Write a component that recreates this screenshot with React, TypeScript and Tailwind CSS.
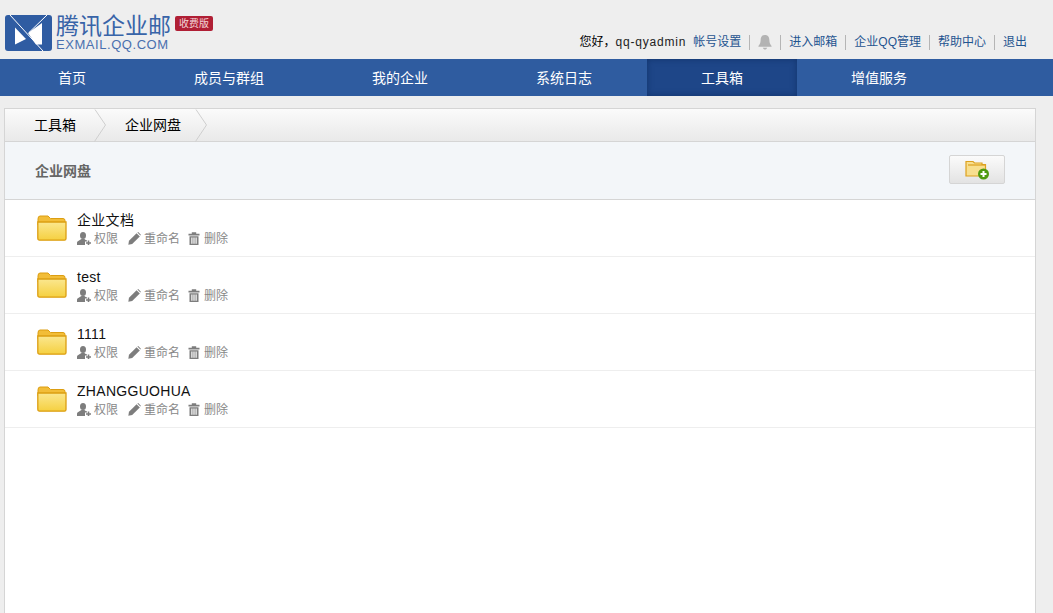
const font = { fontFamily: '"Liberation Sans", "Noto Sans CJK SC", sans-serif' }

const navItems = ['首页', '成员与群组', '我的企业', '系统日志', '工具箱', '增值服务']
const folders = ['企业文档', 'test', '1111', 'ZHANGGUOHUA']

function Logo() {
    return (
        <svg width="47" height="36" viewBox="0 0 47 36" className="mt-[1px] shrink-0">
            <rect x="0" y="0" width="47" height="36" rx="3" fill="#2f5ca2" />
            <path d="M10 12.5 L21 24 L10 29.5 Z" fill="#fff" />
            <path d="M37 8 L37 29.5 L31 29.5 L23 18 Z" fill="#fff" />
            <path d="M5 0 L38 36" stroke="#fff" strokeWidth="1" fill="none" />
            <path d="M42 0 L24 17.5" stroke="#fff" strokeWidth="1" fill="none" />
        </svg>
    )
}

function Bell() {
    return (
        <svg width="14" height="18" viewBox="0 0 16 18">
            <path d="M8 1 C11.5 1 13 3.5 13 7 C13 10 14 12 15.5 13.5 L15.5 14.5 L0.5 14.5 L0.5 13.5 C2 12 3 10 3 7 C3 3.5 4.5 1 8 1 Z" fill="#b3b3b3" />
            <path d="M5.5 15.5 L10.5 15.5 C10 17 9 17.5 8 17.5 C7 17.5 6 17 5.5 15.5 Z" fill="#b3b3b3" />
        </svg>
    )
}

function Folder() {
    return (
        <svg width="30" height="26" viewBox="0 0 30 26" className="shrink-0">
            <defs>
                <linearGradient id="folderFront" x1="0" y1="0" x2="0" y2="1">
                    <stop offset="0" stopColor="#fbe78f" />
                    <stop offset="1" stopColor="#f5d040" />
                </linearGradient>
            </defs>
            <path d="M1 4 Q1 1 3 1 L11 1 L13.5 3.5 L26 3.5 Q28 3.5 28 5.5 L28 10 L1 10 Z" fill="#f2bd38" stroke="#dc9e12" strokeWidth="1" />
            <path d="M0.8 7 L29 7 L29 23.5 Q29 25.2 27.5 25.2 L2.5 25.2 Q0.8 25.2 0.8 23 Z" fill="url(#folderFront)" stroke="#dc9e12" strokeWidth="1.3" />
        </svg>
    )
}

function AddFolder() {
    return (
        <svg width="25" height="20" viewBox="0 0 25 20">
            <path d="M1 1.5 L8 1.5 L9.5 3 L17 3 L17 4.5 L20.5 4.5 L20.5 16 L1 16 Z" fill="#f8df8f" stroke="#dda11f" strokeWidth="1.2" />
            <path d="M3 5 L20 5" stroke="#dda11f" strokeWidth="1.2" />
            <circle cx="18.5" cy="14" r="5.5" fill="#4f9a10" />
            <path d="M15.5 14 H21.5 M18.5 11 V17" stroke="#fff" strokeWidth="2" />
        </svg>
    )
}

function UserPlus() {
    return (
        <svg width="14" height="13" viewBox="0 0 14 13">
            <ellipse cx="6" cy="3.5" rx="3" ry="3.5" fill="#7d7d7d" />
            <path d="M0 13 L0 10.5 C0 9 3 8.2 4.5 7 L7.5 7 C8.5 8 9.5 8.3 10 8.6 L10 9.5 L8 9.5 L8 13 Z" fill="#7d7d7d" />
            <path d="M9 11 H14 M11.5 8.5 V13" stroke="#7d7d7d" strokeWidth="1.6" />
        </svg>
    )
}

function Pencil() {
    return (
        <svg width="13" height="13" viewBox="0 0 13 13">
            <path d="M0.3 12.7 L1 8.8 L8.6 1.2 L11.8 4.4 L4.2 12 Z" fill="#7d7d7d" />
            <path d="M9.4 0.6 L10.2 0.1 L12.9 2.8 L12.4 3.6 Z" fill="#7d7d7d" />
        </svg>
    )
}

function Trash() {
    return (
        <svg width="12" height="13" viewBox="0 0 12 13">
            <path d="M0.5 1.8 H3.8 V0.3 H8.2 V1.8 H11.5 V3.4 H0.5 Z" fill="#7d7d7d" />
            <path d="M1.5 4.3 H10.5 V13 H1.5 Z M3.3 5.6 V11.7 H4.5 V5.6 Z M5.4 5.6 V11.7 H6.6 V5.6 Z M7.5 5.6 V11.7 H8.7 V5.6 Z" fill="#7d7d7d" fillRule="evenodd" />
        </svg>
    )
}

function CrumbArrow() {
    return (
        <svg width="13" height="33" viewBox="0 0 13 33" className="shrink-0">
            <path d="M1 0.5 L11.5 16 L0.5 32.5" fill="none" stroke="#cfcfcf" strokeWidth="1" />
        </svg>
    )
}

function Divider() {
    return <span className="mx-2 h-[15px] w-px bg-[#b5b5b5]" />
}

export default function App() {
    return (
        <div className="h-[613px] w-[1053px] overflow-hidden bg-[#eeeeee] text-[12px]" style={font}>
            {/* Header */}
            <header className="flex h-[59px] items-start justify-between">
                <div className="flex pl-[5px] pt-[14px]">
                    <Logo />
                    <div className="ml-[4px] flex flex-col">
                        <span className="-mt-[1px] h-[26px] text-[23px] leading-[26px] text-[#3864a8]">腾讯企业邮</span>
                        <span className="text-[13px] leading-[11px] tracking-[0.55px] text-[#4a70ae]">EXMAIL.QQ.COM</span>
                    </div>
                    <span className="ml-[4px] mt-[2px] h-[15px] rounded-[2px] bg-[#b01f35] px-[4px] text-[10px] leading-[15px] text-[#f3d5d8]">收费版</span>
                </div>
                <div className="flex items-center pr-[26px] pt-[33px] leading-[18px]">
                    <span className="text-black">您好，</span>
                    <span className="tracking-[0.8px] text-[#222]">qq-qyadmin</span>
                    <a className="ml-[7px] text-[#1f5490]">帐号设置</a>
                    <Divider />
                    <Bell />
                    <Divider />
                    <a className="text-[#1f5490]">进入邮箱</a>
                    <Divider />
                    <a className="text-[#1f5490]">企业QQ管理</a>
                    <Divider />
                    <a className="text-[#1f5490]">帮助中心</a>
                    <Divider />
                    <a className="text-[#1f5490]">退出</a>
                </div>
            </header>

            {/* Nav */}
            <nav className="flex h-[37px] bg-[#2f5ca0] pl-[4px] text-[14px] leading-[38px] text-white">
                {navItems.map(item => (
                    <a
                        key={item}
                        className={item === '工具箱'
                            ? 'ml-[1px] w-[150px] bg-[#1e4688] text-center shadow-[inset_0_0_6px_rgba(10,40,90,0.6)]'
                            : 'px-[54px]'}
                    >
                        {item}
                    </a>
                ))}
            </nav>

            {/* Panel */}
            <main className="ml-[4px] mt-[12px] h-[520px] w-[1032px] border border-[#d5d5d5] bg-white">
                <div className="flex h-[33px] border-b border-[#d5d5d5] bg-gradient-to-b from-[#fbfbfb] to-[#e9e9e9] pl-[29px] text-[14px] leading-[33px] text-black">
                    <span>工具箱</span>
                    <span className="ml-[18px]"><CrumbArrow /></span>
                    <span className="ml-[18px]">企业网盘</span>
                    <span className="ml-[14px]"><CrumbArrow /></span>
                </div>
                <div className="flex h-[58px] items-center justify-between border-b border-[#d5d5d5] bg-[#f3f6f9] px-[30px] pb-[2px]">
                    <span className="pt-[4px] text-[14px] font-bold text-[#666]">企业网盘</span>
                    <button className="flex h-[29px] w-[56px] items-center justify-center rounded-[2px] border border-[#d5d5d5] bg-gradient-to-b from-[#fbfbfb] to-[#e3e3e3]">
                        <AddFolder />
                    </button>
                </div>
                {folders.map(name => (
                    <div key={name} className="flex h-[57px] items-center border-b border-[#eeeeee] pl-[32px]">
                        <Folder />
                        <div className="ml-[10px] flex flex-col pt-[2px]">
                            <span className="text-[14px] leading-[18px] tracking-[0.3px] text-[#111]">{name}</span>
                            <div className="mt-[1px] flex items-center leading-[18px] text-[#888]">
                                <UserPlus />
                                <span className="ml-[3px]">权限</span>
                                <span className="ml-[10px]"><Pencil /></span>
                                <span className="ml-[3px]">重命名</span>
                                <span className="ml-[8px]"><Trash /></span>
                                <span className="ml-[4px]">删除</span>
                            </div>
                        </div>
                    </div>
                ))}
            </main>
        </div>
    )
}
